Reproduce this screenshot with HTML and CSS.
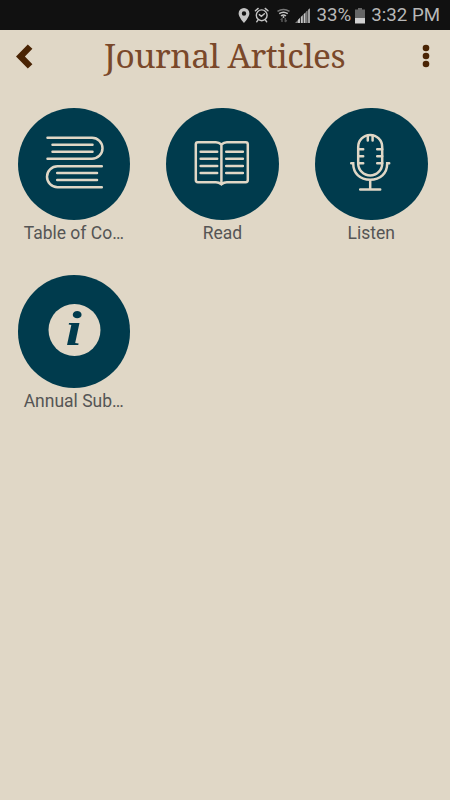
FILE: index.html
```html
<!DOCTYPE html>
<html lang="en">
<head>
    <meta charset="UTF-8">
    <meta name="viewport" content="width=device-width, initial-scale=1.0">
    <title>Journal Articles</title>
    <link rel="stylesheet" href="styles.css">
</head>
<body>

<div class="status-bar">
    <svg class="status-icons" width="75" height="20" viewBox="0 0 75 20">
        <path fill="#c4c4c4" fill-rule="evenodd" d="M6 2a5.400 5.400 0 0 0-5.400 5.400C.6 11 6 17 6 17s5.400-6 5.400-9.600A5.400 5.400 0 0 0 6 2zm0 3.300a2.200 2.200 0 1 1 0 4.400 2.200 2.200 0 0 1 0-4.400z"/>
        <g fill="none" stroke="#c4c4c4" stroke-width="1.400" stroke-linecap="round">
            <circle cx="23.700" cy="9.300" r="5.400"/>
            <path d="M17.400 4.800l2.800-2.400M30 4.800l-2.800-2.400M20 14l-1.300 1.800M27.400 14l1.300 1.800M21.300 8.600l2.100 1.800 3-2.600"/>
        </g>
        <g fill="none" stroke-width="1.500">
            <path stroke="#777" d="M39.500 5.400q6-4 12 0"/>
            <path stroke="#c4c4c4" d="M41.200 7.700q4.300-3 8.600 0M43 10q2.500-2 5 0"/>
            <path stroke="#555" d="M44 12v4M47.300 12v4M42.700 14l1.300-1.500M48.600 14l-1.300 2"/>
        </g>
        <circle cx="45.500" cy="11" r="1" fill="#c4c4c4"/>
        <path fill="#777" d="M57 17l3-3v3z"/>
        <path fill="#c4c4c4" d="M60 17v-3.200l2-2V17zM62.800 17v-6l2-2v8zM65.600 17V8.200l2-2V17zM68.400 17V5.400l1-1V17zM70.200 17V3.700l1.600-1.400V17z"/>
    </svg>
    <span class="percent">33%</span>
    <svg class="battery" width="10" height="16" viewBox="0 0 10 16">
        <path fill="#666" d="M3 0h4v1.500h3V10H0V1.500h3z"/>
        <path fill="#d0d0d0" d="M0 10h10v5.500H0z"/>
    </svg>
    <span class="time">3:32 PM</span>
</div>

<header class="header">
    <svg class="back" width="18" height="25" viewBox="0 0 18 25">
        <path fill="#4a2404" d="M0 12.500L11.800.5l4.600 4.300-7.500 7.700 7.500 7.700-4.600 4.300z"/>
    </svg>
    <h1>Journal Articles</h1>
    <svg class="more" width="8" height="24" viewBox="0 0 8 24" fill="#4a2404">
        <circle cx="4" cy="4" r="3.300"/>
        <circle cx="4" cy="12" r="3.300"/>
        <circle cx="4" cy="20" r="3.300"/>
    </svg>
</header>

<main class="grid">
    <div class="item">
        <svg class="icon" viewBox="0 0 112.5 112.5">
            <path d="M29.500 29.800H74a10.500 10.500 0 0 1 0 21H29.500M34.500 36.800H74.500M34.500 43.800H74.500"/>
            <path d="M83.800 58.200H39.500a10.500 10.500 0 0 0 0 21H83.800M39.200 64.900H79M39.200 71.900H79"/>
        </svg>
        <div class="label">Table of Co…</div>
    </div>
    <div class="item">
        <svg class="icon" viewBox="-0.4 0 112.5 112.5">
            <path d="M55 36.500Q52.500 34.200 49.500 34.200H31.500Q29.400 34.200 29.400 36.300V72Q29.400 74.200 31.500 74.200H49.500Q52.500 74.200 55 76.300Q57.500 74.200 60.500 74.200H79.300Q81.400 74.200 81.400 72V36.300Q81.400 34.200 79.300 34.200H60.500Q57.500 34.200 55 36.500V76"/>
            <path d="M34.200 43.800H50.800M34.200 50.800H50.800M34.200 58.100H50.800M34.200 64.900H50.800M59.800 43.800H76.500M59.800 50.800H76.500M59.800 58.100H76.500M59.800 64.900H76.500"/>
        </svg>
        <div class="label">Read</div>
    </div>
    <div class="item">
        <svg class="icon" viewBox="-0.2 0 112.5 112.5">
            <rect x="43" y="26.900" width="24" height="40.600" rx="12"/>
            <path d="M52.600 27.500V32.500M57.400 27.500V32.500M43 41.200H48M43 48.300H48M43 55.200H48M67 41.200H62M67 48.300H62M67 55.200H62"/>
            <path d="M36 55.200H38C38 65.500 45 71.800 55 71.800S72 65.500 72 55.200H74M55 71.800V81.400M45 81.400H65"/>
        </svg>
        <div class="label">Listen</div>
    </div>
    <div class="item">
        <svg class="icon" viewBox="0 0 112.5 112.5">
            <circle class="disc" cx="56.500" cy="55" r="26"/>
            <text transform="translate(55.700 70.200) scale(1.200 1)" text-anchor="middle">i</text>
        </svg>
        <div class="label">Annual Sub…</div>
    </div>
</main>

</body>
</html>
```
FILE: styles.css
```css
:root {
    --bg: #e0d7c6;
    --navy: #003b4d;
}
* { box-sizing: border-box; }
body {
    font-family: Roboto, sans-serif;
    background: var(--bg);
    margin: 0;
    height: 100vh;
    overflow: hidden;
}

/* Status bar */
.status-bar {
    display: flex;
    align-items: center;
    justify-content: flex-end;
    height: 30px;
    padding-right: 10px;
    background: #111;
    color: #b8b8b8;
    font-size: 18.700px;
    line-height: 30px;
}
.status-icons { margin: 1px 4px 0 0; }
.battery { margin: 1px 6px 0 4px; }

/* Header */
.header {
    display: flex;
    align-items: center;
    justify-content: space-between;
    height: 52px;
    padding: 0 20px 0 16px;
}
.header h1 {
    margin: 0 7px 0 0;
    font-family: "Noto Serif", "DejaVu Serif Condensed", "DejaVu Serif", serif;
    font-size: 33.500px;
    font-weight: 400;
    line-height: 50px;
    letter-spacing: -0.550px;
    padding-bottom: 2px;
    white-space: nowrap;
    color: #7a482a;
}

/* Icon grid */
.grid {
    display: grid;
    grid-template-columns: repeat(3, 112.5px);
    justify-content: space-between;
    row-gap: 28px;
    padding: 25.500px 22.500px 0 17.500px;
}
.item { height: 139.500px; text-align: center; }
.icon {
    display: block;
    width: 112.500px;
    height: 112.500px;
    border-radius: 50%;
    background: var(--navy);
    fill: none;
    stroke: var(--bg);
    stroke-width: 2.500;
    stroke-linecap: round;
}
.icon .disc { fill: var(--bg); stroke: none; }
.icon text {
    fill: var(--navy);
    stroke: none;
    font: italic bold 49px "Liberation Serif", serif;
}
.label {
    margin-top: 2px;
    font-size: 17.500px;
    line-height: 22px;
    white-space: nowrap;
    color: #555;
}
```
